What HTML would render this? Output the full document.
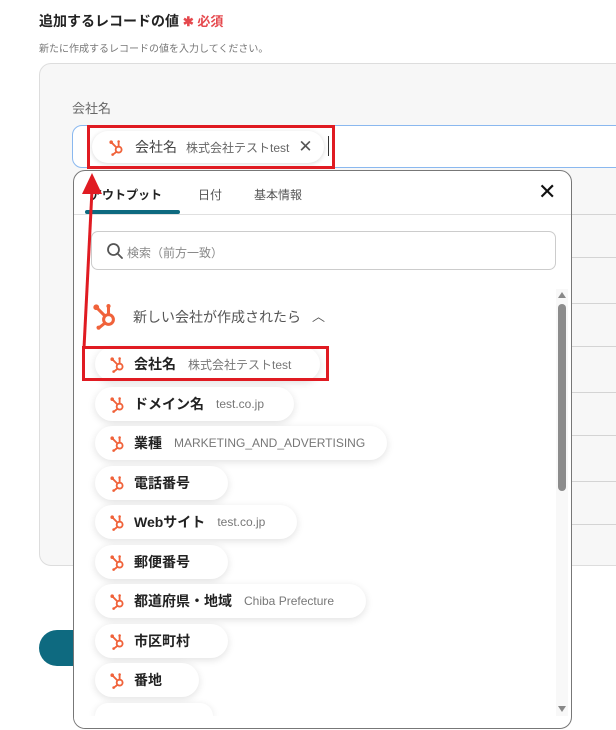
<!DOCTYPE html>
<html><head><meta charset="utf-8">
<style>
*{margin:0;padding:0;box-sizing:border-box}
body{width:616px;height:730px;overflow:hidden;background:#fff;font-family:"Liberation Sans","Noto Sans CJK JP",sans-serif;position:relative;color:#333}
.a{position:absolute}
.pill{position:absolute;left:95px;height:34px;border-radius:17px;background:#fff;box-shadow:0 2px 8px rgba(0,0,0,0.12);display:flex;align-items:center;padding-left:14px;white-space:nowrap}
.pill svg{width:17px;height:17px;margin-right:8px}
.pill b{font-size:14px;color:#222;font-weight:bold}
.pill span{font-size:12px;color:#777;margin-left:12px}
.line{position:absolute;left:572px;width:44px;height:1px;background:#d4d4d4}
</style></head><body>
<svg width="0" height="0" style="position:absolute"><defs>
<symbol id="hs" viewBox="0 0 24 24"><g fill="none" stroke="#f0623a" stroke-width="2.6" stroke-linecap="round"><circle cx="15" cy="15" r="4.2"/><line x1="12" y1="12" x2="5" y2="5"/><line x1="15" y1="10.8" x2="15" y2="4"/><line x1="12" y1="18" x2="7" y2="22"/></g><circle cx="4.5" cy="4.5" r="2.5" fill="#f0623a"/><circle cx="15" cy="3.5" r="1.8" fill="#f0623a"/><circle cx="6.5" cy="22" r="1.8" fill="#f0623a"/></symbol>
</defs></svg>

<div class="a" style="left:39px;top:11px;font-size:14px;font-weight:bold;color:#222">追加するレコードの値 <span style="color:#e5484d;font-size:13px">✱ 必須</span></div>
<div class="a" style="left:39px;top:40px;font-size:10px;color:#777">新たに作成するレコードの値を入力してください。</div>

<div class="a" style="left:39px;top:63px;width:600px;height:503px;background:#f7f7f7;border:1px solid #ddd;border-radius:12px"></div>
<div class="a" style="left:72px;top:98px;font-size:13px;color:#666">会社名</div>
<div class="a" style="left:72px;top:125px;width:560px;height:43px;background:#fff;border:1px solid #8ab8ef;border-radius:10px"></div>
<div class="a" style="left:92px;top:131px;width:232px;height:32px;background:#fff;border-radius:16px;box-shadow:0 1px 5px rgba(0,0,0,0.15);display:flex;align-items:center;padding-left:16px;white-space:nowrap">
<svg width="17" height="17" style="margin-right:10px"><use href="#hs"/></svg><span style="font-size:14px;color:#444">会社名</span><span style="font-size:12px;color:#666;margin-left:9px">株式会社テストtest</span><span style="font-size:17px;color:#555;margin-left:9px">✕</span></div>
<div class="a" style="left:328px;top:136px;width:1px;height:20px;background:#333"></div>
<div class="a" style="left:87px;top:125px;width:248px;height:44px;border:3px solid #e01b22"></div>

<div class="line" style="top:214px"></div><div class="line" style="top:257px"></div><div class="line" style="top:303px"></div><div class="line" style="top:346px"></div><div class="line" style="top:392px"></div><div class="line" style="top:435px"></div><div class="line" style="top:481px"></div><div class="line" style="top:524px"></div>

<div class="a" style="left:39px;top:630px;width:100px;height:36px;background:#0e6a80;border-radius:18px"></div>

<div class="a" style="left:73px;top:170px;width:499px;height:559px;background:#fff;border:1px solid #777;border-radius:12px;overflow:hidden">
 <div class="a" style="left:16px;top:15px;font-size:12px;font-weight:bold;color:#222">アウトプット</div>
 <div class="a" style="left:124px;top:15px;font-size:12px;color:#555">日付</div>
 <div class="a" style="left:180px;top:15px;font-size:12px;color:#555">基本情報</div>
 <div class="a" style="left:464px;top:8px;font-size:22px;color:#111">✕</div>
 <div class="a" style="left:11px;top:39px;width:95px;height:4px;background:#0e6a80;border-radius:2px"></div>
 <div class="a" style="left:0;top:43px;width:499px;height:1px;background:#e0e0e0"></div>
 <div class="a" style="left:17px;top:60px;width:465px;height:39px;border:1px solid #ccc;border-radius:7px"></div>
 <svg class="a" style="left:32px;top:71px" width="18" height="18" viewBox="0 0 18 18"><circle cx="7.5" cy="7.5" r="5.5" fill="none" stroke="#555" stroke-width="1.8"/><line x1="11.5" y1="11.5" x2="16" y2="16" stroke="#555" stroke-width="1.8" stroke-linecap="round"/></svg>
 <div class="a" style="left:53px;top:73px;font-size:12px;color:#888">検索（前方一致）</div>
 <svg class="a" style="left:17px;top:131px" width="28" height="28"><use href="#hs"/></svg>
 <div class="a" style="left:59px;top:136px;font-size:14px;color:#555">新しい会社が作成されたら</div>
 <div class="a" style="left:238px;top:135px;font-size:13px;color:#555">︿</div>
 <div class="a" style="left:482px;top:118px;width:12px;height:430px;background:#f8f8f8"></div>
 <div class="a" style="left:484px;top:121px;width:0;height:0;border-left:4px solid transparent;border-right:4px solid transparent;border-bottom:6px solid #888"></div>
 <div class="a" style="left:484px;top:133px;width:8px;height:187px;background:#8c8c8c;border-radius:4px"></div>
 <div class="a" style="left:484px;top:535px;width:0;height:0;border-left:4px solid transparent;border-right:4px solid transparent;border-top:6px solid #888"></div>
</div>

<div class="pill" style="top:347px;width:225px"><svg><use href="#hs"/></svg><b>会社名</b><span>株式会社テストtest</span></div>
<div class="pill" style="top:387px;width:199px"><svg><use href="#hs"/></svg><b>ドメイン名</b><span>test.co.jp</span></div>
<div class="pill" style="top:426px;width:292px"><svg><use href="#hs"/></svg><b>業種</b><span>MARKETING_AND_ADVERTISING</span></div>
<div class="pill" style="top:466px;width:133px"><svg><use href="#hs"/></svg><b>電話番号</b></div>
<div class="pill" style="top:505px;width:202px"><svg><use href="#hs"/></svg><b>Webサイト</b><span>test.co.jp</span></div>
<div class="pill" style="top:545px;width:133px"><svg><use href="#hs"/></svg><b>郵便番号</b></div>
<div class="pill" style="top:584px;width:271px"><svg><use href="#hs"/></svg><b>都道府県・地域</b><span>Chiba Prefecture</span></div>
<div class="pill" style="top:624px;width:133px"><svg><use href="#hs"/></svg><b>市区町村</b></div>
<div class="pill" style="top:663px;width:104px"><svg><use href="#hs"/></svg><b>番地</b></div>
<div class="a" style="left:74px;top:716px;width:496px;height:12px;background:#fff;border-radius:0 0 11px 11px;z-index:2"></div>
<div class="pill" style="top:703px;width:118px;height:13px;border-radius:17px 17px 0 0;z-index:1"></div>

<div class="a" style="left:82px;top:346px;width:247px;height:35px;border:3px solid #e01b22;z-index:3"></div>
<svg class="a" style="left:0;top:0;z-index:3" width="616" height="730"><line x1="84" y1="348" x2="92" y2="190" stroke="#e01b22" stroke-width="3"/><polygon points="92,173 82,194 102,194" fill="#e01b22"/></svg>
</body></html>
